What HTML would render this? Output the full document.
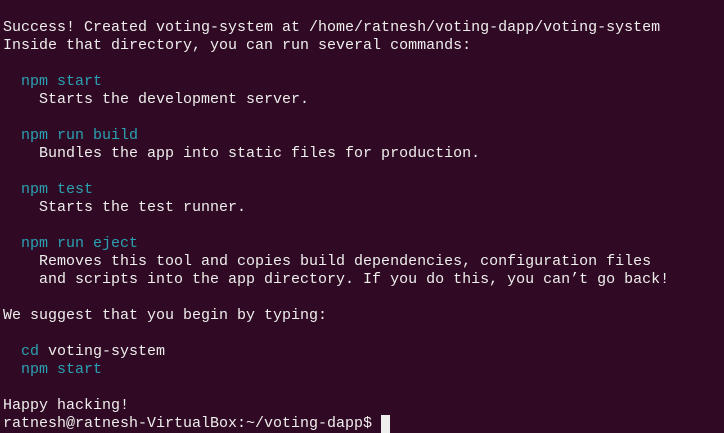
<!DOCTYPE html>
<html><head><style>
html,body{margin:0;padding:0;}
body{width:724px;height:431px;background:#300a24;overflow:hidden;}
pre{margin:0;position:absolute;left:3px;top:19px;font-family:"Liberation Mono",monospace;font-size:15px;line-height:18px;color:#eeeeec;}
.c{color:#2aa1b3;}
.cur{display:inline-block;width:9px;height:18px;background:#eeeeec;vertical-align:top;}
</style></head><body>
<pre>Success! Created voting-system at /home/ratnesh/voting-dapp/voting-system
Inside that directory, you can run several commands:

  <span class="c">npm start</span>
    Starts the development server.

  <span class="c">npm run build</span>
    Bundles the app into static files for production.

  <span class="c">npm test</span>
    Starts the test runner.

  <span class="c">npm run eject</span>
    Removes this tool and copies build dependencies, configuration files
    and scripts into the app directory. If you do this, you can’t go back!

We suggest that you begin by typing:

  <span class="c">cd</span> voting-system
  <span class="c">npm start</span>

Happy hacking!
ratnesh@ratnesh-VirtualBox:~/voting-dapp$ <span class="cur"></span></pre>
</body></html>
